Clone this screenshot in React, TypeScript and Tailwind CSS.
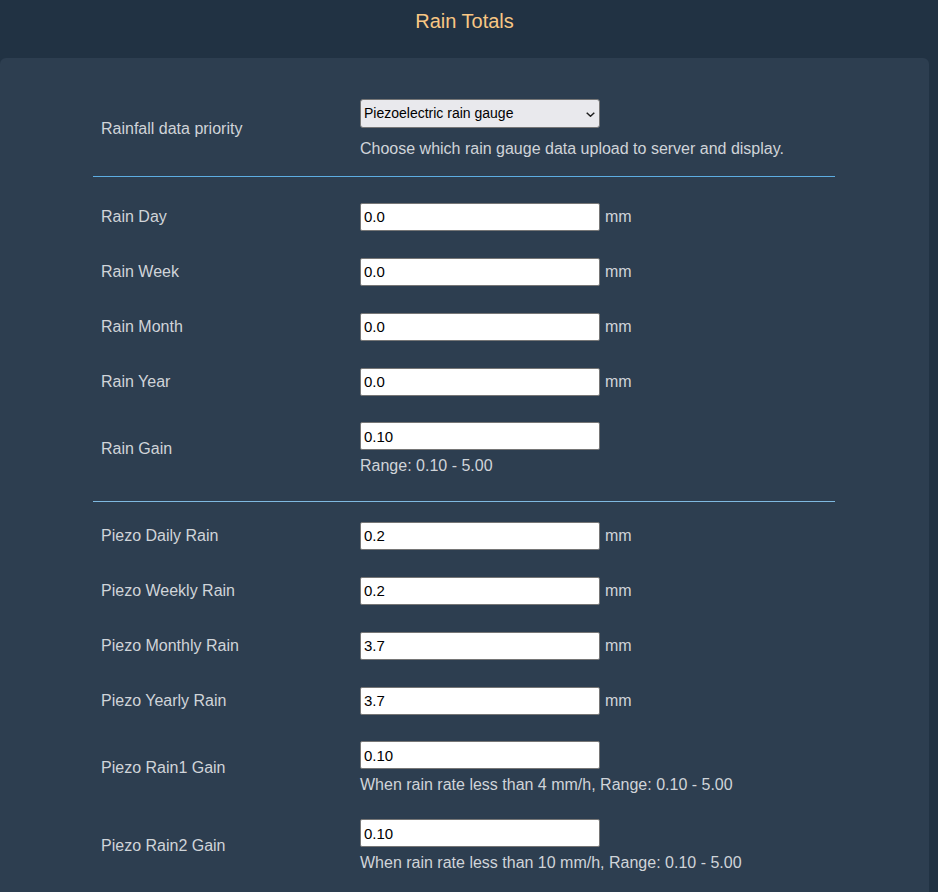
const font = { fontFamily: '"Liberation Sans", Arial, sans-serif' };

function ValueInput({ value }: { value: string }) {
  return (
    <input
      type="text"
      defaultValue={value}
      className="w-[240px] h-[28px] bg-white border border-[#767676] rounded-[2px] px-[3px] text-[15px] text-black outline-none"
      style={font}
    />
  );
}

function MmRow({ label, value }: { label: string; value: string }) {
  return (
    <div className="flex items-center h-[55px]">
      <div className="w-[259px] pl-2 text-[16px] leading-[18px]">{label}</div>
      <div className="flex items-center pl-2">
        <ValueInput value={value} />
        <span className="ml-[5px] text-[16px] leading-[18px]">mm</span>
      </div>
    </div>
  );
}

function GainRow({ label, value, hint }: { label: string; value: string; hint: string }) {
  return (
    <div className="flex items-center pt-[13px] pb-[12px]">
      <div className="w-[259px] pl-2 text-[16px] leading-[18px]">{label}</div>
      <div className="pl-2">
        <ValueInput value={value} />
        <div className="mt-[7px] text-[16px] leading-[18px]">{hint}</div>
      </div>
    </div>
  );
}

export default function App() {
  return (
    <div className="min-h-screen bg-[#213243] overflow-hidden" style={font}>
      <div className="w-[929px]">
        <div className="h-[58px] pt-[9px] text-center">
          <h1 className="text-[20px] leading-[24px] text-[#f9c784]">Rain Totals</h1>
        </div>

        <div className="bg-[#2d3e50] rounded-t-md pt-[41px] pb-[60px] text-[#d0d4d9]">
          <div className="w-[742px] ml-[93px]">
            {/* priority */}
            <div className="flex items-center">
              <div className="w-[259px] pl-2 text-[16px] leading-[18px]">Rainfall data priority</div>
              <div className="pl-2">
                <div className="relative w-[240px]">
                  <select
                    defaultValue="piezo"
                    className="appearance-none w-[240px] h-[29px] bg-[#e9e9ed] border border-[#767676] rounded-[3px] pl-[3px] text-[14px] text-black outline-none"
                    style={font}
                  >
                    <option value="piezo">Piezoelectric rain gauge</option>
                    <option value="traditional">Traditional rain gauge</option>
                  </select>
                  <svg
                    className="absolute right-[5px] top-[13px] pointer-events-none"
                    width="9"
                    height="5"
                    viewBox="0 0 9 5"
                    fill="none"
                  >
                    <path d="M0.7 0.7 L4.5 4.2 L8.3 0.7" stroke="#1f1f1f" strokeWidth="1.5" />
                  </svg>
                </div>
                <div className="mt-[12px] text-[16px] leading-[18px]">
                  Choose which rain gauge data upload to server and display.
                </div>
              </div>
            </div>

            <div className="mt-[18px] h-px bg-[#5dade2]" />

            {/* traditional gauge */}
            <div className="mt-[12px]">
              <MmRow label="Rain Day" value="0.0" />
              <MmRow label="Rain Week" value="0.0" />
              <MmRow label="Rain Month" value="0.0" />
              <MmRow label="Rain Year" value="0.0" />
              <GainRow label="Rain Gain" value="0.10" hint="Range: 0.10 - 5.00" />
            </div>

            <div className="mt-[14px] h-px bg-[#7fb9e0]" />

            {/* piezo gauge */}
            <div className="mt-[6px]">
              <MmRow label="Piezo Daily Rain" value="0.2" />
              <MmRow label="Piezo Weekly Rain" value="0.2" />
              <MmRow label="Piezo Monthly Rain" value="3.7" />
              <MmRow label="Piezo Yearly Rain" value="3.7" />
              <GainRow
                label="Piezo Rain1 Gain"
                value="0.10"
                hint="When rain rate less than 4 mm/h, Range: 0.10 - 5.00"
              />
              <GainRow
                label="Piezo Rain2 Gain"
                value="0.10"
                hint="When rain rate less than 10 mm/h, Range: 0.10 - 5.00"
              />
            </div>
          </div>
        </div>
      </div>
    </div>
  );
}
